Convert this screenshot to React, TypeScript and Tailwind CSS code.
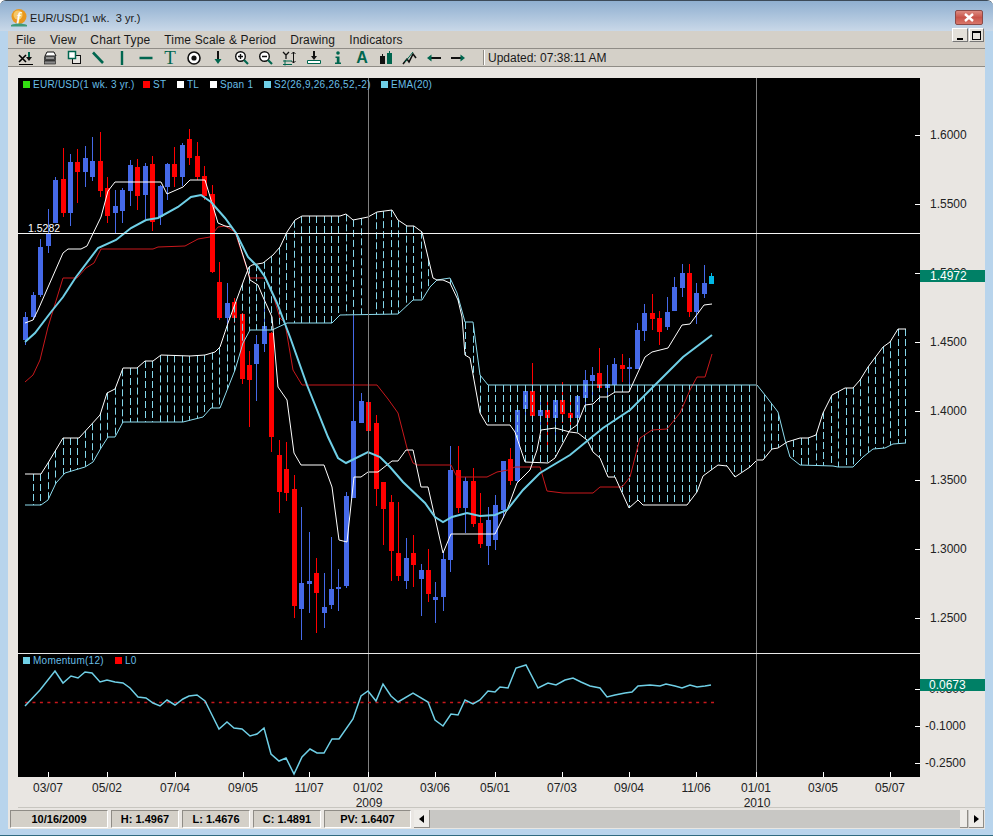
import React from "react";

type Pt = [number, number];

const STEP = 7.457;
const candleX = (i: number) => 25.3 + STEP * i;

// index, color, wick top, body top, body bottom, wick bottom
const candles: [number, string, number, number, number, number][] = [
  [0, "b", 312, 317, 340, 345], [1, "b", 292, 295, 317, 320], [2, "b", 239, 247, 295, 297], [3, "b", 209, 233, 246, 253],
  [4, "b", 177, 180, 223, 223], [5, "r", 148, 179, 213, 217], [6, "b", 154, 162, 213, 226], [7, "r", 149, 162, 172, 203],
  [8, "b", 146, 158, 172, 187], [9, "b", 137, 161, 177, 181], [10, "r", 132, 161, 191, 197], [11, "r", 177, 188, 216, 223],
  [12, "b", 190, 206, 213, 233], [13, "b", 188, 190, 211, 223], [14, "b", 160, 165, 191, 206], [15, "r", 159, 167, 196, 210],
  [16, "b", 163, 166, 195, 219], [17, "r", 156, 164, 222, 231], [18, "b", 185, 186, 217, 225], [19, "b", 163, 164, 187, 200],
  [20, "r", 147, 164, 177, 187], [21, "b", 143, 145, 177, 186], [22, "r", 129, 139, 158, 165], [23, "r", 142, 156, 177, 180],
  [24, "r", 166, 176, 196, 200], [25, "r", 185, 194, 272, 273], [26, "r", 262, 282, 318, 320], [27, "b", 283, 303, 318, 328],
  [28, "r", 298, 302, 318, 323], [29, "r", 313, 314, 379, 384], [30, "r", 351, 365, 380, 427], [31, "b", 335, 344, 364, 401],
  [32, "b", 297, 326, 344, 352], [33, "r", 332, 333, 437, 452], [34, "r", 440, 455, 492, 513], [35, "r", 442, 469, 493, 501],
  [36, "r", 475, 489, 606, 618], [37, "b", 507, 583, 609, 640], [38, "b", 532, 581, 584, 613], [39, "r", 558, 573, 593, 633],
  [40, "b", 573, 607, 613, 628], [41, "b", 537, 589, 605, 609], [42, "b", 569, 587, 589, 611], [43, "b", 492, 496, 586, 588],
  [44, "b", 315, 421, 498, 498], [45, "b", 393, 401, 423, 423], [46, "r", 360, 402, 431, 431], [47, "r", 415, 423, 489, 506],
  [48, "r", 482, 482, 509, 545], [49, "r", 495, 502, 551, 581], [50, "r", 502, 553, 576, 581], [51, "b", 538, 558, 581, 589],
  [52, "r", 535, 553, 565, 587], [53, "b", 564, 570, 579, 616], [54, "r", 549, 570, 594, 602], [55, "b", 582, 597, 600, 623],
  [56, "b", 552, 559, 597, 611], [57, "b", 446, 470, 560, 572], [58, "r", 446, 470, 508, 513], [59, "b", 477, 481, 508, 533],
  [60, "r", 468, 481, 524, 527], [61, "r", 493, 523, 544, 548], [62, "b", 507, 520, 546, 565], [63, "b", 495, 505, 540, 550],
  [64, "b", 461, 461, 510, 518], [65, "r", 448, 459, 481, 485], [66, "b", 410, 410, 481, 483], [67, "b", 391, 391, 409, 415],
  [68, "r", 363, 391, 416, 416], [69, "b", 400, 410, 416, 425], [70, "r", 400, 410, 418, 447], [71, "b", 395, 400, 418, 435],
  [72, "r", 382, 400, 414, 423], [73, "r", 402, 413, 418, 425], [74, "b", 396, 396, 418, 427], [75, "b", 370, 380, 398, 407],
  [76, "b", 367, 375, 381, 400], [77, "r", 348, 373, 388, 388], [78, "b", 365, 384, 388, 397], [79, "b", 358, 364, 385, 385],
  [80, "r", 354, 365, 369, 382], [81, "b", 358, 367, 369, 385], [82, "b", 323, 330, 369, 369], [83, "b", 304, 313, 331, 341],
  [84, "r", 294, 313, 319, 330], [85, "r", 311, 318, 332, 345], [86, "b", 297, 312, 327, 330], [87, "b", 277, 287, 311, 311],
  [88, "b", 264, 273, 288, 297], [89, "r", 264, 273, 312, 317], [90, "b", 283, 293, 312, 324], [91, "b", 265, 283, 294, 298],
  [92, "c", 273, 276, 284, 284],
];

const spanCyan: Pt[] = [
  [25, 505], [41, 505], [48, 500], [56, 483], [65, 473], [85, 467], [93, 462], [101, 448], [108, 437], [115, 437], [123, 422],
  [183, 422], [203, 417], [211, 408], [220, 408], [235, 370], [243, 343], [250, 330], [272, 330], [287, 323], [332, 323], [340, 315],
  [398, 314], [413, 300], [422, 300], [430, 287], [437, 280], [450, 278], [457, 293], [465, 322], [473, 322], [480, 375], [488, 385],
  [757, 385], [765, 395], [778, 412], [785, 440], [790, 457], [800, 465], [833, 466], [838, 467], [853, 467], [863, 457], [873, 449],
  [885, 448], [893, 444], [906, 443],
];

const spanWhite: Pt[] = [
  [25, 474], [41, 474], [48, 463], [63, 438], [79, 438], [100, 415], [107, 393], [115, 389], [123, 368], [137, 368], [145, 361],
  [153, 361], [161, 355], [190, 356], [205, 355], [215, 352], [220, 347], [228, 323], [245, 277], [249, 267], [252, 265], [263, 263],
  [273, 255], [280, 247], [287, 232], [295, 220], [302, 216], [340, 216], [346, 214], [353, 220], [368, 217], [377, 212], [392, 210],
  [398, 220], [407, 226], [414, 226], [422, 232], [433, 278], [437, 280], [443, 280], [450, 283], [458, 300], [462, 317], [465, 355],
  [470, 358], [480, 413], [487, 425], [510, 425], [515, 432], [525, 462], [548, 463], [555, 458], [570, 430], [577, 425], [585, 405],
  [593, 404], [600, 397], [607, 397], [615, 392], [629, 392], [645, 357], [652, 352], [668, 348], [682, 325], [690, 324], [704, 305],
  [712, 304],
];

const tlTail: Pt[] = [
  [587, 440], [593, 452], [600, 458], [608, 477], [615, 477], [629, 508], [638, 500], [643, 505], [687, 505], [697, 492], [703, 476],
  [718, 465], [727, 466], [735, 477], [750, 467], [757, 460], [763, 460], [772, 449], [778, 448], [787, 442], [800, 438], [808, 438],
  [816, 435], [823, 413], [832, 395], [845, 388], [853, 388], [860, 380], [868, 367], [883, 347], [890, 342], [898, 329], [906, 329],
];

const tl: Pt[] = [
  [25, 323], [33, 320], [38, 310], [63, 253], [68, 249], [81, 249], [87, 246], [101, 217], [108, 191], [115, 182], [161, 182],
  [167, 194], [183, 187], [190, 180], [205, 180], [218, 223], [225, 226], [231, 227], [236, 233], [247, 268], [250, 280], [258, 285],
  [263, 297], [272, 317], [278, 387], [287, 400], [294, 453], [301, 465], [324, 465], [332, 487], [339, 540], [347, 542], [354, 477],
  [361, 477], [368, 472], [378, 472], [392, 461], [398, 461], [406, 450], [413, 450], [421, 487], [428, 487], [443, 553], [451, 534],
  [480, 534], [495, 534], [507, 510], [517, 483], [530, 470], [537, 450], [541, 430], [555, 428], [570, 432], [578, 433],
  ...tlTail,
];

// lower bound of the hatching: span line up to the crossing, then TL
const cloudEdge: Pt[] = [...spanWhite.filter((p) => p[0] <= 570), [578, 433], ...tlTail];

const st: Pt[] = [
  [25, 382], [33, 375], [40, 360], [48, 327], [63, 278], [77, 278], [86, 268], [94, 263], [101, 249], [153, 249], [158, 247], [185, 246],
  [198, 239], [210, 237], [218, 227], [225, 226], [235, 232], [250, 278], [265, 278], [273, 295], [280, 318], [285, 323], [293, 370],
  [302, 385], [377, 385], [388, 399], [398, 413], [407, 448], [413, 463], [417, 465], [451, 465], [457, 477], [487, 477], [497, 472],
  [508, 470], [515, 467], [540, 467], [547, 491], [563, 493], [593, 493], [600, 487], [622, 487], [630, 477], [640, 438], [652, 430],
  [667, 429], [680, 413], [690, 390], [697, 377], [705, 377], [712, 354],
];

const ema: Pt[] = [
  [25, 342], [35, 333], [51, 312], [63, 297], [76, 277], [98, 248], [116, 240], [131, 228], [146, 220], [158, 218], [178, 207], [191, 197],
  [201, 195], [211, 202], [225, 218], [236, 233], [248, 257], [258, 267], [265, 277], [277, 303], [290, 337], [307, 385], [328, 437],
  [338, 458], [346, 463], [368, 452], [380, 457], [390, 467], [403, 482], [425, 503], [435, 517], [443, 522], [452, 517], [467, 513],
  [480, 516], [495, 515], [507, 510], [523, 490], [540, 473], [570, 455], [603, 428], [630, 410], [660, 380], [683, 357], [712, 335],
];

const momentum: Pt[] = [
  [25, 706], [40, 690], [55, 671], [63, 683], [71, 676], [78, 678], [85, 672], [92, 673], [100, 682], [107, 680], [115, 682], [123, 683],
  [130, 688], [138, 697], [146, 698], [153, 703], [160, 706], [167, 700], [175, 705], [183, 699], [189, 696], [197, 695], [205, 701],
  [212, 715], [219, 729], [227, 722], [234, 728], [242, 729], [250, 736], [257, 734], [264, 728], [271, 754], [279, 761], [286, 758],
  [294, 774], [302, 757], [310, 749], [317, 753], [324, 753], [332, 739], [339, 739], [353, 719], [361, 696], [368, 691], [376, 701],
  [383, 684], [391, 696], [398, 702], [413, 693], [428, 702], [435, 720], [443, 726], [451, 714], [458, 715], [465, 700], [473, 704],
  [480, 700], [488, 691], [495, 692], [500, 687], [508, 688], [516, 668], [526, 665], [538, 688], [548, 683], [556, 685], [565, 680],
  [573, 678], [581, 682], [590, 686], [600, 688], [607, 697], [615, 695], [625, 693], [632, 692], [638, 686], [650, 685], [660, 686],
  [666, 684], [675, 686], [682, 688], [690, 685], [697, 687], [705, 686], [711, 685],
];

const priceTicks: [string, number][] = [
  ["1.6000", 135], ["1.5500", 204], ["1.5000", 273], ["1.4500", 342], ["1.4000", 411], ["1.3500", 480], ["1.3000", 549], ["1.2500", 618],
];

const timeTicks: [string, number][] = [
  ["03/07", 48], ["05/02", 107], ["07/04", 175], ["09/05", 243], ["11/07", 309], ["01/02", 368], ["03/06", 435], ["05/01", 495],
  ["07/03", 562], ["09/04", 629], ["11/06", 696], ["01/01", 756], ["03/05", 823], ["05/07", 890],
];

const toPoints = (pts: Pt[]) => pts.map((p) => p.join(",")).join(" ");

const yAt = (pts: Pt[], x: number) => {
  for (let i = 1; i < pts.length; i++) {
    if (x <= pts[i][0]) {
      const [x0, y0] = pts[i - 1];
      const [x1, y1] = pts[i];
      return y0 + ((y1 - y0) * (x - x0)) / (x1 - x0);
    }
  }
  return pts[pts.length - 1][1];
};

const hatches = Array.from({ length: 118 }, (_, n) => n + 1).map((i) => {
  const x = Math.round(candleX(i)) + 0.5;
  const a = yAt(spanCyan, x);
  const b = yAt(cloudEdge, x);
  return { x, top: Math.min(a, b), bottom: Math.max(a, b) };
});

const CYAN = "#6fcfe6";
const LEGEND = "#69bfe6";

const Legend = ({ x, y, color, label }: { x: number; y: number; color: string; label: string }) => (
  <g>
    <rect x={x} y={y - 4} width={7} height={7} fill={color} />
    <text x={x + 10} y={y + 3} fontSize={10} letterSpacing={0.25} fill={LEGEND}>
      {label}
    </text>
  </g>
);

const Chart = () => (
  <svg width={967} height={732} viewBox="18 78 967 732" className="block shrink-0">
    <rect x={18} y={78} width={902} height={699} fill="#000" />

    {candles.map(([i, c, wt, bt, bb, wb]) => {
      const x = Math.round(candleX(i));
      const fill = c === "b" ? "#4569e8" : c === "r" ? "#ff0000" : "#00b8e6";
      return (
        <g key={i} fill={fill}>
          <rect x={x} y={wt} width={1} height={wb - wt} />
          <rect x={x - 2} y={bt} width={5} height={Math.max(bb - bt, 2)} />
        </g>
      );
    })}

    {hatches.map((h) =>
      h.bottom - h.top > 3 ? (
        <line key={h.x} x1={h.x} x2={h.x} y1={h.top} y2={h.bottom} stroke="#84d6ea" strokeDasharray="7 3" />
      ) : null
    )}

    <polyline points={toPoints(st)} fill="none" stroke="#c8181c" strokeWidth={1} />
    <polyline points={toPoints(spanCyan)} fill="none" stroke="#8edcee" strokeWidth={1} />
    <polyline points={toPoints(spanWhite)} fill="none" stroke="#ffffff" strokeWidth={1} />
    <polyline points={toPoints(tl)} fill="none" stroke="#ffffff" strokeWidth={1} />
    <polyline points={toPoints(ema)} fill="none" stroke={CYAN} strokeWidth={2} />

    <line x1={368.5} x2={368.5} y1={78} y2={777} stroke="#808080" />
    <line x1={756.5} x2={756.5} y1={78} y2={777} stroke="#808080" />
    <line x1={18} x2={920} y1={233.5} y2={233.5} stroke="#f4f4f4" />
    <line x1={18} x2={920} y1={653.5} y2={653.5} stroke="#e8e8e8" />
    <text x={28} y={232} fontSize={10.5} fill="#ffffff">
      1.5282
    </text>

    <Legend x={23} y={85} color="#33dd11" label="EUR/USD(1 wk.  3 yr.)" />
    <Legend x={143} y={85} color="#ff0000" label="ST" />
    <Legend x={177} y={85} color="#ffffff" label="TL" />
    <Legend x={210} y={85} color="#ffffff" label="Span 1" />
    <Legend x={264} y={85} color={CYAN} label="S2(26,9,26,26,52,-2)" />
    <Legend x={381} y={85} color={CYAN} label="EMA(20)" />
    <Legend x={23} y={661} color={CYAN} label="Momentum(12)" />
    <Legend x={115} y={661} color="#ff0000" label="L0" />

    <line x1={25} x2={714} y1={702.5} y2={702.5} stroke="#c8181c" strokeWidth={1.5} strokeDasharray="3 4.457" />
    <polyline points={toPoints(momentum)} fill="none" stroke={CYAN} strokeWidth={1.5} />

    {timeTicks.map(([label, x]) => (
      <g key={label}>
        <line x1={x + 0.5} x2={x + 0.5} y1={772} y2={777} stroke="#ffffff" />
        <text x={x} y={792} fontSize={12} textAnchor="middle" fill="#222">
          {label}
        </text>
      </g>
    ))}
    <line x1={18} x2={985} y1={807.5} y2={807.5} stroke="#c8c6c0" />
    <text x={369} y={807} fontSize={12} textAnchor="middle" fill="#222">
      2009
    </text>
    <text x={757} y={807} fontSize={12} textAnchor="middle" fill="#222">
      2010
    </text>

    {priceTicks.map(([label, y]) => (
      <g key={label}>
        <line x1={915} x2={920} y1={y + 0.5} y2={y + 0.5} stroke="#ffffff" />
        <text x={930} y={y + 4} fontSize={12} fill="#222">
          {label}
        </text>
      </g>
    ))}
    {[
      ["-0.0500", 689],
      ["-0.1000", 726],
      ["-0.2500", 763],
    ].map(([label, y]) => (
      <g key={label}>
        <line x1={915} x2={920} y1={Number(y) + 0.5} y2={Number(y) + 0.5} stroke="#ffffff" />
        <text x={925} y={Number(y) + 4} fontSize={12} fill="#222">
          {label}
        </text>
      </g>
    ))}

    <rect x={920} y={270} width={65} height={12} fill="#008066" />
    <text x={930} y={280} fontSize={12} fill="#ffffff">
      1.4972
    </text>
    <rect x={920} y={679} width={65} height={12} fill="#008066" />
    <text x={929} y={689} fontSize={12} fill="#ffffff">
      0.0673
    </text>
  </svg>
);

const TEAL = "#00664f";

const toolIcons: React.ReactNode[] = [
  <>
    <path d="M1 5l7 7M8 5l-7 7" stroke="#000" strokeWidth={1.6} />
    <path d="M11 2v6" stroke={TEAL} strokeWidth={2} />
    <path d="M8 7h6l-3 4z" fill="#111" />
    <path d="M1 14.5h14" stroke="#000" />
  </>,
  <>
    <path d="M5 2h7l2 4H3z" fill="#fff" stroke="#111" />
    <rect x={2} y={6} width={12} height={5} rx={1} fill="#444" />
    <rect x={2.5} y={11} width={11} height={3} fill="#888" stroke="#111" strokeWidth={0.6} />
    <path d="M4 8h8" stroke="#ddd" />
  </>,
  <>
    <rect x={6.5} y={5.5} width={8} height={8} fill="#e8e6e2" stroke="#111" />
    <rect x={2.5} y={1.5} width={7} height={7} fill="#fff" stroke={TEAL} strokeWidth={1.5} />
  </>,
  <path d="M3 2.5l10 10.5" stroke={TEAL} strokeWidth={2.6} />,
  <path d="M8 1v14" stroke={TEAL} strokeWidth={2.4} />,
  <path d="M0 8h13" stroke={TEAL} strokeWidth={2.4} transform="translate(1.5 0)" />,
  <span className="text-[19px] leading-none text-[#00664f] [font-family:'Liberation_Serif',serif]">T</span>,
  <>
    <circle cx={8} cy={8} r={6} fill="#fff" stroke="#111" strokeWidth={1.6} />
    <circle cx={8} cy={8} r={2.6} fill="#111" />
  </>,
  <>
    <path d="M8 1v9" stroke="#111" strokeWidth={2} />
    <path d="M4.5 9h7L8 14z" fill={TEAL} />
  </>,
  <>
    <circle cx={6.5} cy={6.5} r={4.8} fill="#fff" stroke="#111" strokeWidth={1.4} />
    <path d="M4 6.5h5M6.5 4v5" stroke="#111" strokeWidth={1.4} />
    <path d="M10 10l4 4" stroke={TEAL} strokeWidth={2.2} />
  </>,
  <>
    <circle cx={6.5} cy={6.5} r={4.8} fill="#fff" stroke="#111" strokeWidth={1.4} />
    <path d="M4 6.5h5" stroke="#111" strokeWidth={1.4} />
    <path d="M10 10l4 4" stroke={TEAL} strokeWidth={2.2} />
  </>,
  <>
    <path d="M1 2l3 3 3-3M4 5v4" stroke="#111" strokeWidth={1.3} fill="none" />
    <path d="M11.5 2v11M9.5 4l2-2 2 2M9.5 11l2 2 2-2" stroke="#111" strokeWidth={1} fill="none" />
    <path d="M1 11h9M1 14.5h9M3 10v5.5" stroke={TEAL} strokeWidth={1} fill="none" />
  </>,
  <>
    <path d="M8 1v6" stroke="#111" strokeWidth={2} />
    <path d="M5 6h6L8 10z" fill="#111" />
    <path d="M1.5 10.5h13v3h-13z" fill="#fff" stroke={TEAL} />
  </>,
  <>
    <circle cx={8} cy={3} r={1.8} fill={TEAL} />
    <path d="M5.5 6.5H9.5V12.5H11V14H5V12.5H6.8V8H5.5z" fill={TEAL} />
  </>,
  <span className="text-[16px] leading-none font-bold text-[#00664f]">A</span>,
  <>
    <rect x={2} y={6} width={5} height={8} fill="#111" />
    <path d="M4.5 4v2" stroke="#111" />
    <rect x={9} y={3} width={5} height={11} fill={TEAL} />
    <path d="M11.5 1v2" stroke={TEAL} />
  </>,
  <>
    <path d="M1 14l4-5 2 3 4-8 3 4" stroke="#111" strokeWidth={1.6} fill="none" />
    <path d="M3 12l8-10" stroke={TEAL} strokeWidth={1} />
  </>,
  <>
    <path d="M4 8h11" stroke="#111" strokeWidth={2} />
    <path d="M5.5 4.5v7L1 8z" fill={TEAL} />
  </>,
  <>
    <path d="M1 8h11" stroke="#111" strokeWidth={2} />
    <path d="M10.5 4.5v7L15 8z" fill={TEAL} />
  </>,
];

const statusCells = [
  { text: "10/16/2009", w: "w-[98px]" },
  { text: "H: 1.4967", w: "w-[68px]" },
  { text: "L: 1.4676", w: "w-[68px]" },
  { text: "C: 1.4891", w: "w-[68px]" },
  { text: "PV: 1.6407", w: "w-[87px]" },
];

const menus = ["File", "View", "Chart Type", "Time Scale & Period", "Drawing", "Indicators"];

const FLogo = () => (
  <svg width={18} height={18} viewBox="0 0 18 18" className="shrink-0">
    <circle cx={9} cy={7.5} r={7.5} fill="#e8971e" />
    <circle cx={8} cy={6} r={4.5} fill="#f6c868" />
    <text x={9} y={12} fontSize={13} fontWeight={700} fontStyle="italic" textAnchor="middle" fill="#fff" fontFamily="'Liberation Serif', serif">
      f
    </text>
    <path d="M1 16c5-2 11-2 16 0v1.5H1z" fill="#3f9a7c" />
  </svg>
);

export default function App() {
  return (
    <div className="w-[993px] h-[836px] overflow-hidden bg-[#b8d4ec] rounded-t-md border-t border-[#3c4a58] flex flex-col [font-family:'Liberation_Sans',Arial,sans-serif] text-[#1a1a1a]">
      <div className="h-[30px] shrink-0 flex items-start justify-between pl-[10px] pr-[10px] pt-[8px] bg-gradient-to-b from-[#8fafd0] to-[#c9d8e8]">
        <div className="flex items-center gap-[2px] text-[11px] tracking-[0.05px] whitespace-pre">
          <FLogo />
          <span>EUR/USD(1 wk.  3 yr.)</span>
        </div>
        <div className="w-[28px] h-[15px] mt-[1px] rounded-[2px] border border-[#8a4a48] bg-gradient-to-b from-[#dc8a80] via-[#c8544a] to-[#d8766a] flex items-center justify-center">
          <svg width={12} height={9} viewBox="0 0 12 9">
            <path d="M2 1l8 7M10 1L2 8" stroke="#fff" strokeWidth={2.4} />
          </svg>
        </div>
      </div>

      <div className="flex-1 flex flex-col mx-[8px] min-h-0">
        <div className="h-[17px] shrink-0 bg-[#d4d0c8] flex items-center justify-between text-[12px] tracking-[0.15px]">
          <div className="flex gap-[14px] pl-[8px]">
            {menus.map((m) => (
              <span key={m}>{m}</span>
            ))}
          </div>
          <div className="flex gap-[1px] mr-[1px] self-start -mt-[3px]">
            <div className="w-[16px] h-[14px] bg-[#e4e1da] border border-white border-b-[#777] border-r-[#777] flex items-end justify-center pb-[1px]">
              <div className="w-[6px] h-[2px] bg-black" />
            </div>
            <div className="w-[15px] h-[14px] bg-[#e4e1da] border border-white border-b-[#777] border-r-[#777] flex items-center justify-center">
              <div className="w-[9px] h-[9px] border border-black border-t-2" />
            </div>
          </div>
        </div>

        <div className="h-[19px] shrink-0 bg-[#d4d0c8] border-y border-[#8f8c86] flex items-center pl-[6px]">
          {toolIcons.map((icon, i) => (
            <div key={i} className="w-[24px] h-[17px] flex items-center justify-center shrink-0">
              {i === 6 || i === 14 ? (
                icon
              ) : (
                <svg width={16} height={16} viewBox="0 0 16 16">
                  {icon}
                </svg>
              )}
            </div>
          ))}
          <div className="w-[2px] h-[15px] ml-[13px] border-l border-r border-l-[#8f8c86] border-r-white" />
          <span className="ml-[3px] text-[12px]">Updated: 07:38:11 AM</span>
        </div>

        <div className="flex-1 min-h-0 bg-[#e9e6e2] pt-[11px] pl-[10px]">
          <Chart />
        </div>

        <div className="h-[19px] shrink-0 bg-[#e9e6e2] flex items-start gap-[3px] pl-[2px] pr-[1px]">
          {statusCells.map((c) => (
            <div
              key={c.text}
              className={`${c.w} h-[18px] shrink-0 bg-[#d4d0c8] border border-t-[#8f8c86] border-l-[#8f8c86] border-r-white border-b-white flex items-center justify-center text-[11px] font-bold text-black`}
            >
              {c.text}
            </div>
          ))}
          <div className="flex-1 h-[18px] flex items-stretch bg-[#c8c7c4]">
            <div className="w-[16px] bg-[#eeece8] border-r border-b border-[#8f8c86] flex items-center justify-center">
              <div className="border-y-[4px] border-y-transparent border-r-[5px] border-r-black" />
            </div>
            <div className="flex-1" />
            <div className="w-[8px] bg-[#eeece8] border-r border-b border-[#8f8c86]" />
            <div className="w-[15px] ml-[1px] bg-[#eeece8] border-r border-b border-[#8f8c86] flex items-center justify-center">
              <div className="border-y-[4px] border-y-transparent border-l-[5px] border-l-black" />
            </div>
          </div>
        </div>
      </div>

      <div className="h-[7px] shrink-0 border-b border-[#2f6a80]" />
    </div>
  );
}
